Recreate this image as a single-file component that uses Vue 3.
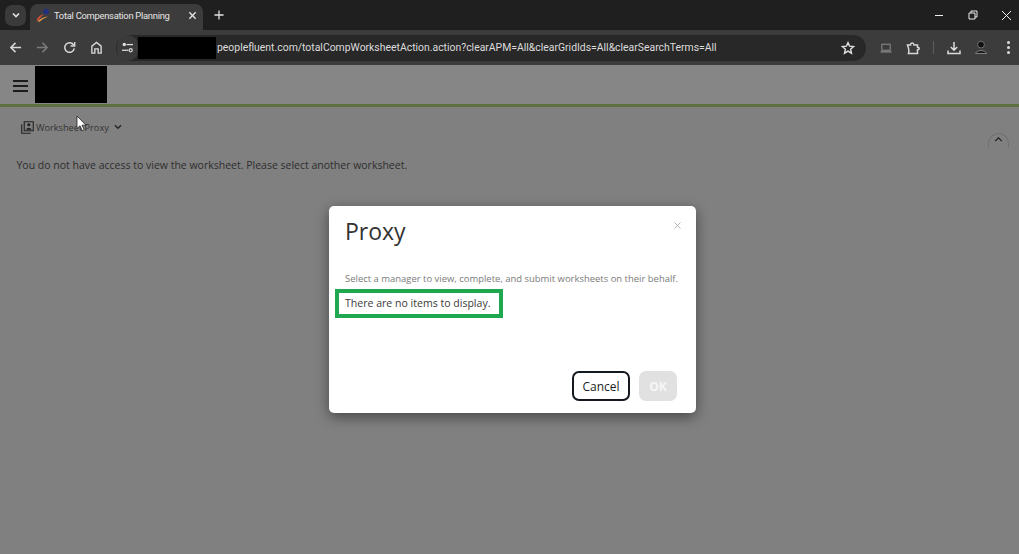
<script setup>
const url = 'peoplefluent.com/totalCompWorksheetAction.action?clearAPM=All&clearGridIds=All&clearSearchTerms=All'
</script>

<template>
  <div class="screen">
    <div class="tabstrip">
      <div class="tabsearch">
        <svg width="10" height="10" viewBox="0 0 10 10"><path d="M2 3.5 5 6.5 8 3.5" fill="none" stroke="#e3e3e3" stroke-width="1.6"/></svg>
      </div>
      <div class="tab">
        <svg class="favicon" width="14" height="14" viewBox="0 0 14 14">
          <circle cx="10" cy="3.6" r="2.8" fill="#23307e"/>
          <path d="M0.5 12.5C2 8.5 5 6.5 8.5 6.3 6 7.6 4 9.6 2.5 12.5Z" fill="#d9503a"/>
          <path d="M1.5 13.5C4.5 10.5 8 9 12 8.5 8.5 10 6 11.5 3.5 13.8Z" fill="#e79a45"/>
        </svg>
        <span class="tabtitle">Total Compensation Planning</span>
        <svg class="tabclose" width="9" height="9" viewBox="0 0 10 10"><path d="M1.5 1.5 8.5 8.5M8.5 1.5 1.5 8.5" stroke="#e3e3e3" stroke-width="1.5"/></svg>
      </div>
      <svg class="newtab" width="10" height="10" viewBox="0 0 11 11"><path d="M5.5 0.5V10.5M0.5 5.5H10.5" stroke="#e3e3e3" stroke-width="1.4"/></svg>
      <div class="winbtns">
        <svg width="10" height="10" viewBox="0 0 10 10"><path d="M1 5.5H9" stroke="#eee" stroke-width="1"/></svg>
        <svg width="10" height="10" viewBox="0 0 10 10"><path d="M1 3H7V9H1ZM3 3V1H9V7H7" fill="none" stroke="#eee" stroke-width="1"/></svg>
        <svg width="11" height="11" viewBox="0 0 11 11"><path d="M1 1 10 10M10 1 1 10" stroke="#eee" stroke-width="1"/></svg>
      </div>
    </div>

    <div class="toolbar">
      <svg class="nav" width="13" height="13" viewBox="0 0 14 14"><path d="M13 7H2M7 2 2 7 7 12" fill="none" stroke="#d8d8d8" stroke-width="1.6"/></svg>
      <svg class="nav" width="13" height="13" viewBox="0 0 14 14"><path d="M1 7H12M7 2 12 7 7 12" fill="none" stroke="#7b7b7b" stroke-width="1.6"/></svg>
      <svg class="nav" width="13" height="13" viewBox="0 0 14 14"><path d="M11.6 4.4A5.2 5.2 0 1 0 12.2 8" fill="none" stroke="#d8d8d8" stroke-width="1.6"/><path d="M12.6 1V5.4H8.2" fill="none" stroke="#d8d8d8" stroke-width="1.5"/></svg>
      <svg class="nav" width="13" height="13" viewBox="0 0 14 14"><path d="M2 13V5.5L7 1.5 12 5.5V13H8.8V8.5H5.2V13Z" fill="none" stroke="#d8d8d8" stroke-width="1.5"/></svg>
      <div class="omnibox">
        <div class="tune">
          <svg width="13" height="11" viewBox="0 0 14 12">
            <circle cx="3.5" cy="2.8" r="1.9" fill="#dcdcdc"/><path d="M6 2.8H13" stroke="#dcdcdc" stroke-width="1.4"/>
            <circle cx="10.5" cy="9" r="1.7" fill="none" stroke="#dcdcdc" stroke-width="1.3"/><path d="M1 9H8" stroke="#dcdcdc" stroke-width="1.4"/>
          </svg>
        </div>
        <div class="redact-url"></div>
        <span class="url">{{ url }}</span>
        <svg class="star" width="14" height="14" viewBox="0 0 14 14"><path d="M7 1.6 8.6 5.2 12.6 5.6 9.6 8.2 10.5 12.2 7 10.1 3.5 12.2 4.4 8.2 1.4 5.6 5.4 5.2Z" fill="none" stroke="#e0e0e0" stroke-width="1.4"/></svg>
      </div>
      <div class="tools">
        <svg class="t-laptop" width="12" height="10" viewBox="0 0 13 10"><path d="M2 1H11V7.5H2ZM0.5 9.2H12.5" fill="none" stroke="#8c8c8c" stroke-width="1.1"/></svg>
        <svg class="t-ext" width="14" height="14" viewBox="0 0 14 14"><path d="M1.5 4H4.5C4.5 1.6 7.6 1 8 4H11.5V6.2C13.8 6.4 13.8 8.6 11.5 8.8V12.5H2.5C3.5 10 2.6 7 1.5 4Z" fill="none" stroke="#d8d8d8" stroke-width="1.5"/></svg>
        <span class="t-sep"></span>
        <svg class="t-dl" width="14" height="14" viewBox="0 0 14 14"><path d="M7 1V9M3.8 6 7 9.2 10.2 6M1 9.5V12.6H13V9.5" fill="none" stroke="#dcdcdc" stroke-width="1.5"/></svg>
        <svg class="t-prof" width="14" height="15" viewBox="0 0 14 15"><circle cx="7" cy="4.6" r="3.4" fill="#111" stroke="#777" stroke-width="0.9"/><path d="M1.5 13.5C3 9.5 11 9.5 12.5 13.5Z" fill="#1a1a1a" stroke="#888" stroke-width="0.9"/></svg>
        <div class="t-menu"><i></i><i></i><i></i></div>
      </div>
    </div>

    <div class="page">
      <header class="pagehead">
        <div class="burger"><i></i><i></i><i></i></div>
        <div class="logo"></div>
      </header>
      <div class="content">
        <div class="wsrow">
          <svg width="13" height="13" viewBox="0 0 14 14">
            <path d="M3.5 0.8H13.2V10.5H3.5Z" fill="none" stroke="#222" stroke-width="1.2"/>
            <path d="M0.8 3.5V13.2H10.5" fill="none" stroke="#222" stroke-width="1.2"/>
            <circle cx="8.4" cy="4" r="1.7" fill="#222"/>
            <path d="M5.4 9.5C5.6 6.6 11.2 6.6 11.4 9.5Z" fill="#222"/>
          </svg>
          <span class="wslabel">Worksheet Proxy</span>
          <svg width="8" height="6" viewBox="0 0 9 7"><path d="M1 1.5 4.5 5 8 1.5" fill="none" stroke="#222" stroke-width="1.5"/></svg>
        </div>
        <div class="collapse">
          <svg width="9" height="5" viewBox="0 0 10 6"><path d="M1 5 5 1 9 5" fill="none" stroke="#1a1a1a" stroke-width="1.3"/></svg>
        </div>
        <p class="msg">You do not have access to view the worksheet. Please select another worksheet.</p>
      </div>

      <svg class="cursor" width="12" height="17" viewBox="0 0 12 17"><path d="M1 1V13.5L4 10.8 6.2 15.6 8.2 14.7 6 10.2H10Z" fill="#fff" stroke="#222" stroke-width="0.8"/></svg>

      <div class="modal">
        <div class="modal-top">
          <h2 class="modal-title">Proxy</h2>
          <svg class="modal-x" width="7" height="7" viewBox="0 0 7 7"><path d="M0.5 0.5 6.5 6.5M6.5 0.5 0.5 6.5" stroke="#b5b5b5" stroke-width="1"/></svg>
        </div>
        <p class="modal-desc">Select a manager to view, complete, and submit worksheets on their behalf.</p>
        <div class="highlight">There are no items to display.</div>
        <div class="modal-actions">
          <button class="btn cancel">Cancel</button>
          <button class="btn ok">OK</button>
        </div>
      </div>
    </div>
  </div>
</template>

<style>
html, body { margin: 0; padding: 0; background: #808080; overflow: hidden; }
</style>

<style scoped>
.screen { width: 1019px; height: 554px; display: flex; flex-direction: column; font-family: "Open Sans", "Noto Sans", sans-serif; overflow: hidden; }

.tabstrip { height: 30px; background: #1f1f1f; display: flex; align-items: center; flex: none; }
.tabsearch { width: 21px; height: 21px; margin-left: 5px; border-radius: 7px; background: #3a3a3a; display: flex; align-items: center; justify-content: center; flex: none; }
.tab { width: 173px; height: 26px; margin-left: 4px; align-self: flex-end; background: #3c3c3c; border-radius: 8px 8px 0 0; display: flex; align-items: center; padding: 0 6px 4px 6px; box-sizing: border-box; flex: none; }
.favicon { flex: none; }
.tabtitle { margin-left: 4px; font-family: Roboto, sans-serif; font-size: 9.4px; letter-spacing: -0.27px; color: #e6e6e6; white-space: nowrap; flex: 1; min-width: 0; }
.tabclose { flex: none; }
.newtab { margin-left: 11px; flex: none; }
.winbtns { margin-left: auto; width: 78px; margin-right: 7px; display: flex; justify-content: space-between; align-items: center; flex: none; }

.toolbar { height: 35px; background: #3c3c3c; display: flex; align-items: center; flex: none; padding-left: 9px; box-sizing: border-box; }
.nav { margin-right: 14px; flex: none; }
.omnibox { width: 750px; height: 26px; margin-left: -1px; background: #282828; border-radius: 13px; display: flex; align-items: center; box-sizing: border-box; flex: none; }
.tune { width: 21px; height: 26px; margin-left: 1px; background: #3a3a3a; border-radius: 13px; display: flex; align-items: center; justify-content: center; flex: none; }
.redact-url { width: 78px; height: 22px; background: #000; flex: none; }
.url { font-family: Roboto, sans-serif; font-size: 10.42px; color: #dcdcdc; margin-left: 1px; white-space: nowrap; flex: 1; }
.star { margin-right: 11px; flex: none; }
.tools { display: flex; align-items: center; flex: 1; padding-left: 14px; }
.t-ext { margin-left: 14px; }
.t-sep { width: 1px; height: 13px; background: #5e5e5e; margin-left: 13px; }
.t-dl { margin-left: 13px; }
.t-prof { margin-left: 13px; }
.t-menu { margin-left: 19px; display: flex; flex-direction: column; gap: 2px; }
.t-menu i { display: block; width: 3px; height: 3px; border-radius: 50%; background: #dcdcdc; }

.page { flex: 1; position: relative; background: #808080; display: flex; flex-direction: column; }
.pagehead { height: 39px; background: #868686; border-bottom: 3px solid #5d7140; display: flex; align-items: flex-start; flex: none; }
.burger { width: 15px; margin: 15px 0 0 13px; display: flex; flex-direction: column; gap: 3px; }
.burger i { display: block; height: 2px; background: #1c1c1c; }
.logo { width: 72px; height: 37px; background: #000; margin: 1px 0 0 7px; }

.content { position: relative; flex: 1; padding: 13px 16px 0 16.5px; }
.wsrow { display: flex; align-items: center; margin-left: 4.5px; height: 14px; }
.wslabel { font-size: 9.2px; color: #333; margin: 0 5px 0 2px; white-space: nowrap; }
.collapse { position: absolute; top: 26px; right: 10px; width: 21px; height: 14px; border: 1px solid #6f6f6f; border-bottom: none; border-radius: 11px 11px 0 0; box-sizing: border-box; display: flex; justify-content: center; padding-top: 3px; }
.msg { margin: 24px 0 0; font-size: 10.5px; line-height: 14px; color: #2e2e2e; white-space: nowrap; }
.cursor { position: absolute; left: 76px; top: 50px; }

.modal { position: absolute; left: 329px; top: 141px; width: 367px; height: 207px; background: #fff; border-radius: 5px; box-shadow: 0 4px 14px rgba(0,0,0,.45); box-sizing: border-box; padding: 0 19px 0 16px; display: flex; flex-direction: column; }
.modal-top { position: relative; height: 54px; flex: none; }
.modal-title { margin: 0; font-weight: 400; font-size: 23px; line-height: 31px; padding-top: 10px; color: #333; }
.modal-x { position: absolute; right: -4px; top: 16px; }
.modal-desc { margin: 12px 0 0; font-size: 9.46px; line-height: 14px; color: #7a7a7a; white-space: nowrap; }
.highlight { margin: 3px 0 0 -10px; width: 168px; height: 29px; border: 4px solid #1fa84f; box-sizing: border-box; padding-left: 6px; font-size: 10.55px; line-height: 20px; color: #3a3a3a; white-space: nowrap; }
.modal-actions { margin-top: 53px; display: flex; justify-content: flex-end; gap: 9px; }
.btn { height: 30px; border-radius: 7px; font-family: inherit; font-size: 12px; padding: 0; box-sizing: border-box; }
.cancel { width: 58px; background: #fff; border: 2px solid #14181f; color: #1a1f26; font-weight: 500; }
.ok { width: 38px; background: #e1e1e1; border: none; color: #f6f6f6; font-weight: 700; }
</style>
